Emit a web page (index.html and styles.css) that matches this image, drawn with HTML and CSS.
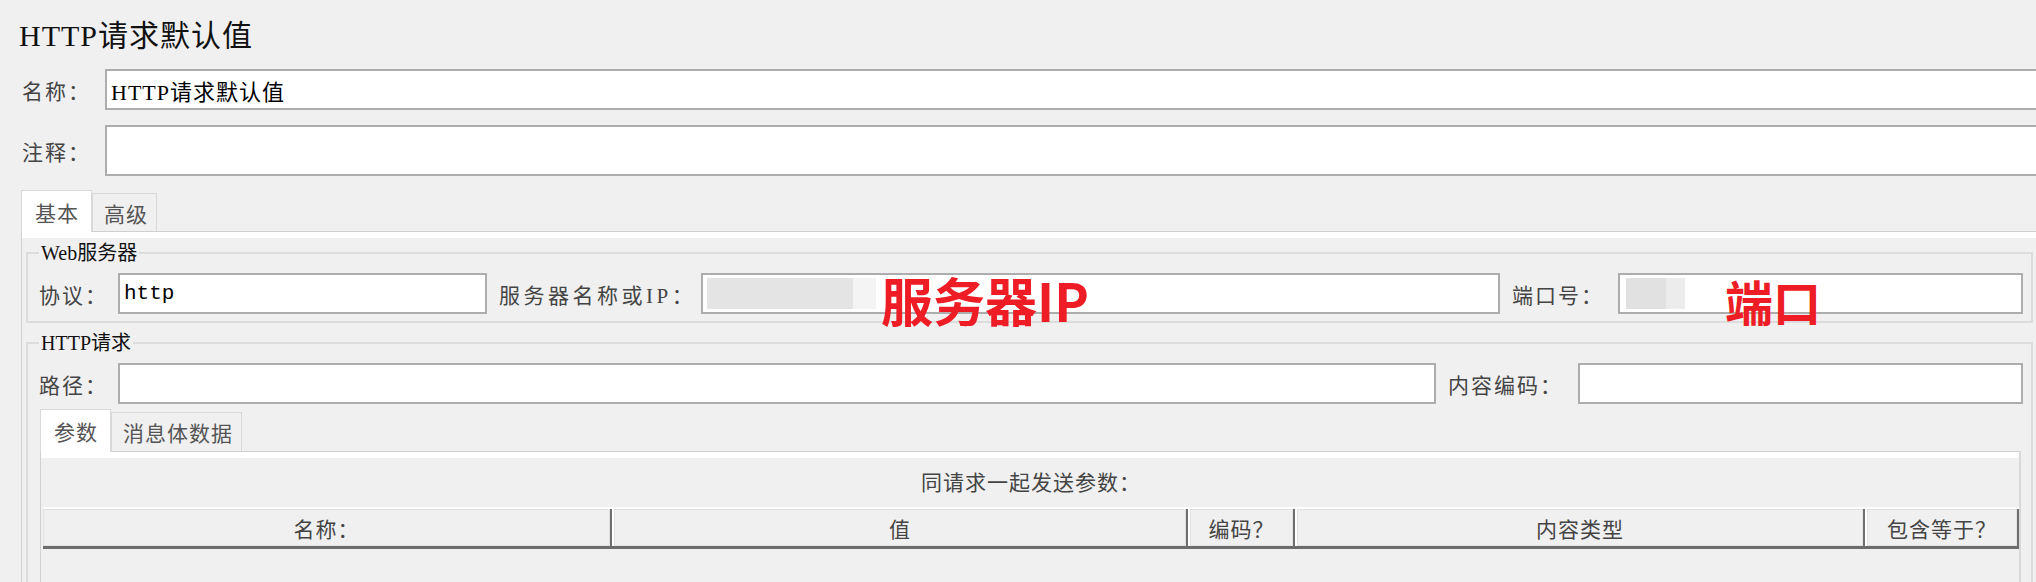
FILE: index.html
```html
<!DOCTYPE html>
<html lang="zh-CN">
<head>
    <meta charset="UTF-8">
    <title>HTTP请求默认值</title>
    <link rel="stylesheet" href="styles.css">
</head>
<body>

<div class="page">
    <div class="title">HTTP请求默认值</div>

    <div class="meta-row">
        <span class="meta-label">名称：</span>
        <div class="text-field name-field">HTTP请求默认值</div>
    </div>
    <div class="meta-row comment-row">
        <span class="meta-label">注释：</span>
        <div class="text-field comment-field"></div>
    </div>

    <div class="tabs">
        <span class="tab active">基本</span>
        <span class="tab">高级</span>
    </div>
    <div class="tab-body">
        <div class="tab-inner">
            <fieldset class="group server-group">
                <legend>Web服务器</legend>
                <div class="server-grid">
                    <span class="field-label">协议：</span>
                    <div class="text-field">http</div>
                    <span class="field-label gap wide">服务器名称或IP：</span>
                    <div class="text-field annotated">
                        <span class="masked ip-mask"></span>
                        <span class="note ip-note">服务器IP</span>
                    </div>
                    <span class="field-label gap">端口号：</span>
                    <div class="text-field annotated">
                        <span class="masked port-mask"></span>
                        <span class="note port-note">端口</span>
                    </div>
                </div>
            </fieldset>

            <fieldset class="group request-group">
                <legend>HTTP请求</legend>
                <div class="request-grid">
                    <span class="field-label">路径：</span>
                    <div class="text-field"></div>
                    <span class="field-label gap">内容编码：</span>
                    <div class="text-field"></div>
                </div>

                <div class="tabs inner-tabs">
                    <span class="tab active">参数</span>
                    <span class="tab">消息体数据</span>
                </div>
                <div class="tab-body inner-body">
                    <div class="tab-inner">
                        <div class="params-caption">同请求一起发送参数：</div>
                        <div class="table-head">
                            <span class="head-cell">名称：</span>
                            <span class="head-cell">值</span>
                            <span class="head-cell">编码？</span>
                            <span class="head-cell">内容类型</span>
                            <span class="head-cell">包含等于？</span>
                        </div>
                        <div class="table-rows"></div>
                    </div>
                </div>
            </fieldset>
        </div>
    </div>
</div>

</body>
</html>
```

FILE: styles.css
```css
body {
    margin: 0;
    height: 582px;
    overflow: hidden;
    background-color: #f0f0f0;
    font-family: "Liberation Serif", "Noto Sans CJK SC", serif;
    color: #444;
}

.page {
    padding-left: 21px;
}

.title {
    padding-top: 18px;
    margin-left: -2px;
    font-size: 30px;
    line-height: 36px;
    letter-spacing: 1px;
    color: #111;
}

.meta-row {
    display: grid;
    grid-template-columns: 84px 1fr;
    align-items: center;
    margin-top: 15px;
    margin-right: -20px;
    height: 41px;
}

.comment-row {
    height: 51px;
}

.meta-label, .field-label {
    font-size: 21px;
    letter-spacing: 2px;
    white-space: nowrap;
}

.meta-label {
    padding-left: 1px;
}

.text-field {
    box-sizing: border-box;
    height: 100%;
    display: flex;
    align-items: center;
    padding-left: 4px;
    background-color: #fff;
    border: 2px solid #adadad;
    font-family: "Liberation Mono", "Noto Sans CJK SC", monospace;
    font-size: 21px;
    color: #000;
    white-space: nowrap;
}

.name-field {
    font-family: "Liberation Serif", "Noto Sans CJK SC", serif;
    font-size: 22px;
    letter-spacing: 1px;
}

/* tabs */
.tabs {
    display: flex;
    align-items: flex-end;
    height: 41px;
    margin-top: 14px;
}

.tab {
    position: relative;
    box-sizing: border-box;
    height: 38px;
    display: flex;
    align-items: center;
    padding: 0 8px 0 11px;
    border: 1px solid #d9d9d9;
    border-bottom: none;
    font-size: 21px;
    letter-spacing: 1px;
    color: #555;
}

.tab.active {
    height: 42px;
    margin-bottom: -1px;
    padding: 0 12px 0 13px;
    background-color: #fff;
    z-index: 1;
}

.tab-body {
    margin-right: -10px;
    border-top: 1px solid #d0d0d0;
    border-left: 1px solid #d0d0d0;
}

.tab-inner {
    border-top: 6px solid #fff;
    padding-top: 3px;
}

/* group boxes */
.group {
    margin: 0 13px 0 4px;
    padding: 8px 8px 7px 11px;
    border: 2px solid #dcdcdc;
}

.group legend {
    padding: 0 2px;
    font-size: 20px;
    line-height: 24px;
    color: #111;
}

.request-group {
    margin-top: 8px;
    padding-bottom: 0;
    border-bottom: none;
}

.server-grid, .request-grid {
    display: grid;
    height: 41px;
    align-items: center;
}

.server-grid {
    grid-template-columns: 79px 369px 214px 1fr 118px 405px;
}

.request-grid {
    grid-template-columns: 79px 1fr 142px 445px;
}

.field-label.gap {
    padding-left: 12px;
}

.field-label.wide {
    letter-spacing: 3.5px;
}

.annotated {
    position: relative;
}

.masked {
    height: 31px;
}

.ip-mask {
    width: 169px;
    background: linear-gradient(to right, #e3e4e3 0 146px, #f4f4f4 146px);
}

.port-mask {
    width: 59px;
    margin-left: 2px;
    background: linear-gradient(to right, #e1e1e1 0 40px, #ececec 40px);
}

.note {
    position: absolute;
    font-family: "Noto Sans CJK SC", sans-serif;
    font-weight: 700;
    color: #ee1c25;
    letter-spacing: 0;
}

.ip-note {
    left: 178px;
    top: -1px;
    font-size: 52px;
    line-height: 52px;
}

.port-note {
    left: 105px;
    top: 1px;
    font-size: 48px;
    line-height: 48px;
}

/* inner tabbed pane */
.inner-tabs {
    margin-top: 6px;
    margin-left: 1px;
}

.inner-tabs .tab {
    height: 39px;
}

.inner-tabs .tab.active {
    height: 43px;
}

.inner-body {
    margin: 0 2px 0 1px;
    border-right: 2px solid #d8d8d8;
}

.inner-body .tab-inner {
    padding: 0 0 0 2px;
}

.params-caption {
    height: 49px;
    line-height: 50px;
    text-align: center;
    font-size: 21px;
    letter-spacing: 1px;
    color: #444;
}

.table-head {
    display: grid;
    grid-template-columns: 569px 576px 107px 570px 1fr;
    height: 37px;
    border-top: 2px solid #fff;
    border-bottom: 3px solid #6c6c6c;
}

.head-cell {
    display: flex;
    align-items: center;
    justify-content: center;
    border-left: 2px solid #fff;
    border-right: 2px solid #6f6f6f;
    box-shadow: inset 0 0 0 1px #e2e2e2;
    font-size: 21px;
    letter-spacing: 1px;
    color: #444;
}

.head-cell:first-child {
    border-left: none;
}

.table-rows {
    height: 120px;
}
```
